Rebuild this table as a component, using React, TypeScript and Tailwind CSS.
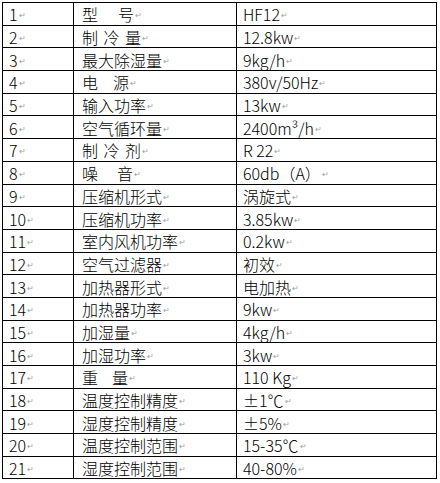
import React from 'react';

type Row = { no: string; name: string[]; gap?: string; value: string };

const rows: Row[] = [
    { no: '1', name: ['型', '号'], gap: 'w-[20px]', value: 'HF12' },
    { no: '2', name: ['制', '冷', '量'], gap: 'w-[5.5px]', value: '12.8kw' },
    { no: '3', name: ['最大除湿量'], value: '9kg/h' },
    { no: '4', name: ['电', '源'], gap: 'w-[15px]', value: '380v/50Hz' },
    { no: '5', name: ['输入功率'], value: '13kw' },
    { no: '6', name: ['空气循环量'], value: '2400m³/h' },
    { no: '7', name: ['制', '冷', '剂'], gap: 'w-[5.5px]', value: 'R 22' },
    { no: '8', name: ['噪', '音'], gap: 'w-[19px]', value: '60db（A）' },
    { no: '9', name: ['压缩机形式'], value: '涡旋式' },
    { no: '10', name: ['压缩机功率'], value: '3.85kw' },
    { no: '11', name: ['室内风机功率'], value: '0.2kw' },
    { no: '12', name: ['空气过滤器'], value: '初效' },
    { no: '13', name: ['加热器形式'], value: '电加热' },
    { no: '14', name: ['加热器功率'], value: '9kw' },
    { no: '15', name: ['加湿量'], value: '4kg/h' },
    { no: '16', name: ['加湿功率'], value: '3kw' },
    { no: '17', name: ['重', '量'], gap: 'w-[14px]', value: '110 Kg' },
    { no: '18', name: ['温度控制精度'], value: '±1℃' },
    { no: '19', name: ['湿度控制精度'], value: '±5%' },
    { no: '20', name: ['温度控制范围'], value: '15-35℃' },
    { no: '21', name: ['湿度控制范围'], value: '40-80%' },
];

// Word's paragraph mark at the end of each cell
function Mark() {
    return (
        <span className="inline-block ml-[1px] font-['DejaVu_Sans',sans-serif] text-[8px] leading-none text-[#a0a0a0] relative top-[-3px]">
            ↵
        </span>
    );
}

export default function App() {
    return (
        <div className="w-[440px] h-[483px] bg-white pt-[2px] pl-[2px] font-['Noto_Sans_CJK_SC',sans-serif] font-light text-[16px] text-black">
            <table className="border-collapse table-fixed w-[435px]">
                <colgroup>
                    <col className="w-[71px]" />
                    <col className="w-[163px]" />
                    <col />
                </colgroup>
                <tbody>
                    {rows.map((r) => (
                        <tr key={r.no} className="h-[22.7px]">
                            <td className="border border-black pl-[6px] pt-[2px] leading-none whitespace-nowrap">
                                {r.no}
                                <Mark />
                            </td>
                            <td className="border border-black pl-[8px] pt-[2px] leading-none whitespace-pre">
                                {r.name.map((part, i) => (
                                    <React.Fragment key={i}>
                                        {i > 0 && <span className={`inline-block ${r.gap}`}> </span>}
                                        {part}
                                    </React.Fragment>
                                ))}
                                <Mark />
                            </td>
                            <td className="border border-black pl-[6px] pt-[2px] leading-none whitespace-nowrap">
                                {r.value}
                                <Mark />
                            </td>
                        </tr>
                    ))}
                </tbody>
            </table>
        </div>
    );
}
